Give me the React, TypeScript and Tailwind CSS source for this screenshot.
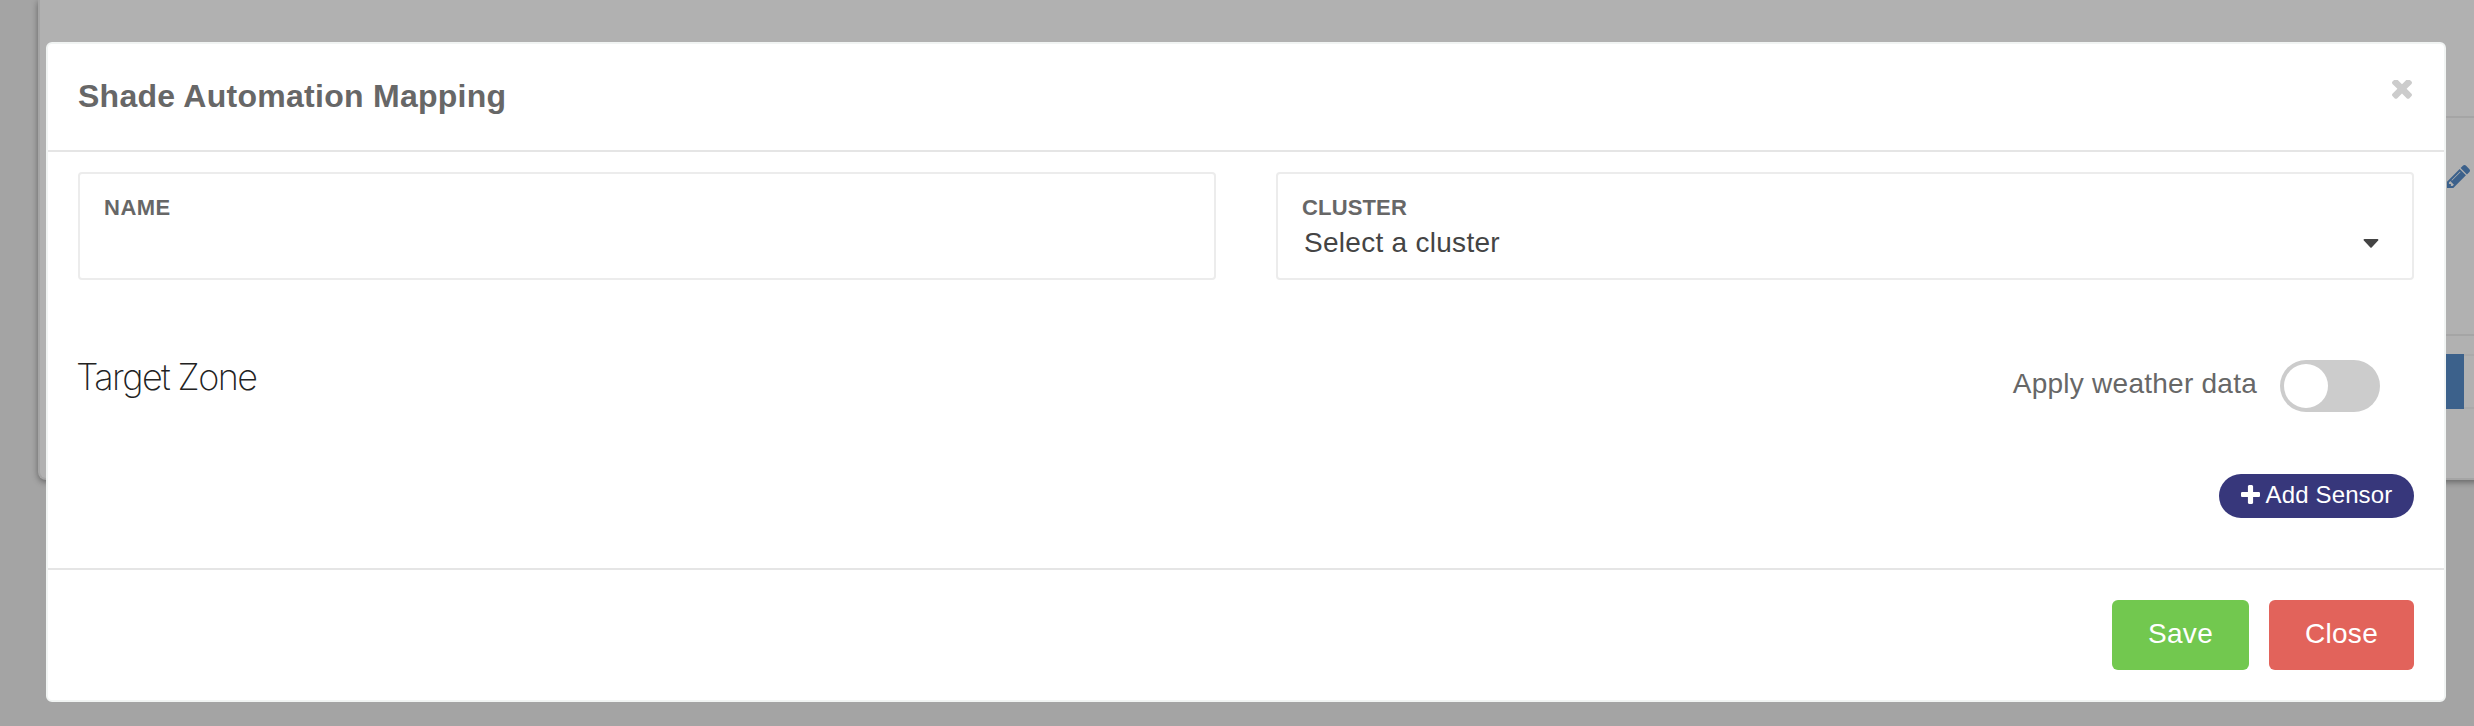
function TimesIcon({ className }: { className?: string }) {
  return (
    <svg className={className} viewBox="302 434 1188 1188" fill="currentColor">
      <path d="M1490 1322q0 40-28 68l-136 136q-28 28-68 28t-68-28l-294-294-294 294q-28 28-68 28t-68-28l-136-136q-28-28-28-68t28-68l294-294-294-294q-28-28-28-68t28-68l136-136q28-28 68-28t68 28l294 294 294-294q28-28 68-28t68 28l136 136q28 28 28 68t-28 68l-294 294 294 294q28 28 28 68z" />
    </svg>
  );
}

function PlusIcon({ className }: { className?: string }) {
  return (
    <svg className={className} viewBox="192 128 1408 1408" fill="currentColor">
      <path d="M1600 736v192q0 40-28 68t-68 28h-416v416q0 40-28 68t-68 28h-192q-40 0-68-28t-28-68v-416h-416q-40 0-68-28t-28-68v-192q0-40 28-68t68-28h416v-416q0-40 28-68t68-28h192q40 0 68 28t28 68v416h416q40 0 68 28t28 68z" />
    </svg>
  );
}

function PencilIcon({ className }: { className?: string }) {
  return (
    <svg className={className} viewBox="128 149 1515 1515" fill="currentColor">
      <path d="M491 1536l91-91-235-235-91 91v107h128v128h107zm523-928q0-22-22-22-10 0-17 7l-542 542q-7 7-7 17 0 22 22 22 10 0 17-7l542-542q7-7 7-17zm-54-192l416 416-832 832h-416v-416zm683 96q0 53-37 90l-166 166-416-416 166-165q36-38 90-38 53 0 91 38l235 234q37 39 37 91z" />
    </svg>
  );
}

function BackgroundPage() {
  return (
    <div className="absolute inset-0 overflow-hidden bg-[#a4a4a4] pl-[38px]">
      <div className="h-[480px] w-[2480px] rounded-bl-[8px] border-b-2 border-l-2 border-[#a5a5a5] bg-[#b1b1b1] pl-[40px] shadow-[0_2px_6px_rgba(0,0,0,0.4)]">
        <div className="h-[118px] border-b-2 border-[#a5a5a5]" />
        <div className="flex h-[218px] justify-end border-b-2 border-[#a5a5a5] pt-[47px] pr-[48px]">
          <PencilIcon className="size-[23px] text-[#3c618b]" />
        </div>
        <div className="h-[20px] border-b-2 border-[#aaaaaa]" />
        <div className="flex h-[53px] justify-end border-b-2 border-[#aaaaaa] pr-[54px]">
          <div className="-mt-[2px] h-[55px] w-[60px] bg-[#3c618b]" />
        </div>
      </div>
    </div>
  );
}

export default function App() {
  return (
    <div className="relative h-[726px] w-[2474px] overflow-hidden font-['Liberation_Sans',Arial,sans-serif]">
      <BackgroundPage />
      <div className="relative px-[46px] pt-[42px]">
        <section className="flex h-[660px] w-[2400px] flex-col rounded-[6px] border-2 border-[#f1f4f3] bg-white">
          <header className="flex h-[108px] shrink-0 items-start justify-between border-b-2 border-[#e5e5e5] pr-[32px] pl-[30px]">
            <h1 className="mt-[32px] text-[32px] leading-[40px] font-bold tracking-[0.27px] text-[#676767]">Shade Automation Mapping</h1>
            <button className="mt-[36px]" aria-label="Close">
              <TimesIcon className="size-[20px] text-[#cccccc]" />
            </button>
          </header>

          <main className="h-[418px] shrink-0 border-b-2 border-[#e5e5e5] px-[30px] pt-[20px]">
            <div className="grid grid-cols-2 gap-[60px]">
              <label className="h-[108px] rounded-[4px] border-2 border-[#ececec] px-[24px] pt-[20px]">
                <span className="block text-[22px] leading-[28px] font-bold tracking-[0.5px] text-[#676767]">NAME</span>
              </label>
              <div className="h-[108px] rounded-[4px] border-2 border-[#ececec] px-[24px] pt-[20px]">
                <span className="block text-[22px] leading-[28px] font-bold tracking-[0.15px] text-[#676767]">CLUSTER</span>
                <div className="flex h-[42px] items-center justify-between pr-[9px] pl-[2px]">
                  <span className="text-[28px] tracking-[0.28px] text-[#444444]">Select a cluster</span>
                  <svg className="h-[9px] w-[16px]" viewBox="0 0 16 9">
                    <path d="M1.5 1H14.5L8 7.8Z" fill="#444" stroke="#444" strokeWidth="1.8" strokeLinejoin="round" />
                  </svg>
                </div>
              </div>
            </div>

            <div className="mt-[78px] flex items-start justify-between pr-[34px]">
              <h2 className="-mt-[1px] -ml-[2px] font-['Inter','Liberation_Sans',sans-serif] text-[36px] leading-[40px] font-[200] tracking-[-1.6px] text-[#222222]">Target Zone</h2>
              <div className="flex items-start gap-[23px]">
                <span className="mt-[8px] text-[28px] leading-[36px] tracking-[0.25px] text-[#676767]">Apply weather data</span>
                <div className="mt-[2px] h-[52px] w-[100px] rounded-full bg-[#cccccc] p-[4px]">
                  <div className="size-[44px] rounded-full bg-white" />
                </div>
              </div>
            </div>

            <div className="mt-[62px] flex justify-end">
              <button className="flex h-[44px] w-[195px] items-center gap-[6px] rounded-full bg-[#37377b] pl-[21.5px] text-[24px] tracking-[0.15px] text-white">
                <PlusIcon className="-mt-[3px] size-[19px]" />
                <span className="-mt-[2px]">Add Sensor</span>
              </button>
            </div>
          </main>

          <footer className="flex justify-end gap-[20px] pt-[30px] pr-[30px]">
            <button className="h-[70px] w-[137px] rounded-[6px] bg-[#72c84f] pb-[2px] text-[28px] tracking-[0.3px] text-white">Save</button>
            <button className="h-[70px] w-[145px] rounded-[6px] bg-[#e2635b] pb-[2px] text-[28px] tracking-[0.3px] text-white">Close</button>
          </footer>
        </section>
      </div>
    </div>
  );
}
